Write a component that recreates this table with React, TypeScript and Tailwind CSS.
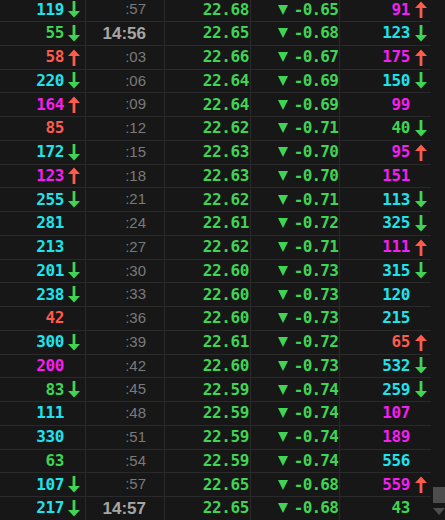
type Tone = "c" | "g" | "r" | "m";
type Dir = "up" | "down" | null;

interface Row {
  vol: number;
  volTone: Tone;
  volDir: Dir;
  time: string;
  price: string;
  diff: string;
  qty: number;
  qtyTone: Tone;
  qtyDir: Dir;
}

const toneClass: Record<Tone, string> = {
  c: "text-[#1ee3ec]",
  g: "text-[#3fd454]",
  r: "text-[#ff5b4d]",
  m: "text-[#f41ef0]",
};

const rows: Row[] = [
  { vol: 119, volTone: "c", volDir: "down", time: ":57", price: "22.68", diff: "-0.65", qty: 91, qtyTone: "m", qtyDir: "up" },
  { vol: 55, volTone: "g", volDir: "down", time: "14:56", price: "22.65", diff: "-0.68", qty: 123, qtyTone: "c", qtyDir: "down" },
  { vol: 58, volTone: "r", volDir: "up", time: ":03", price: "22.66", diff: "-0.67", qty: 175, qtyTone: "m", qtyDir: "up" },
  { vol: 220, volTone: "c", volDir: "down", time: ":06", price: "22.64", diff: "-0.69", qty: 150, qtyTone: "c", qtyDir: "down" },
  { vol: 164, volTone: "m", volDir: "up", time: ":09", price: "22.64", diff: "-0.69", qty: 99, qtyTone: "m", qtyDir: null },
  { vol: 85, volTone: "r", volDir: null, time: ":12", price: "22.62", diff: "-0.71", qty: 40, qtyTone: "g", qtyDir: "down" },
  { vol: 172, volTone: "c", volDir: "down", time: ":15", price: "22.63", diff: "-0.70", qty: 95, qtyTone: "m", qtyDir: "up" },
  { vol: 123, volTone: "m", volDir: "up", time: ":18", price: "22.63", diff: "-0.70", qty: 151, qtyTone: "m", qtyDir: null },
  { vol: 255, volTone: "c", volDir: "down", time: ":21", price: "22.62", diff: "-0.71", qty: 113, qtyTone: "c", qtyDir: "down" },
  { vol: 281, volTone: "c", volDir: null, time: ":24", price: "22.61", diff: "-0.72", qty: 325, qtyTone: "c", qtyDir: "down" },
  { vol: 213, volTone: "c", volDir: null, time: ":27", price: "22.62", diff: "-0.71", qty: 111, qtyTone: "m", qtyDir: "up" },
  { vol: 201, volTone: "c", volDir: "down", time: ":30", price: "22.60", diff: "-0.73", qty: 315, qtyTone: "c", qtyDir: "down" },
  { vol: 238, volTone: "c", volDir: "down", time: ":33", price: "22.60", diff: "-0.73", qty: 120, qtyTone: "c", qtyDir: null },
  { vol: 42, volTone: "r", volDir: null, time: ":36", price: "22.60", diff: "-0.73", qty: 215, qtyTone: "c", qtyDir: null },
  { vol: 300, volTone: "c", volDir: "down", time: ":39", price: "22.61", diff: "-0.72", qty: 65, qtyTone: "r", qtyDir: "up" },
  { vol: 200, volTone: "m", volDir: null, time: ":42", price: "22.60", diff: "-0.73", qty: 532, qtyTone: "c", qtyDir: "down" },
  { vol: 83, volTone: "g", volDir: "down", time: ":45", price: "22.59", diff: "-0.74", qty: 259, qtyTone: "c", qtyDir: "down" },
  { vol: 111, volTone: "c", volDir: null, time: ":48", price: "22.59", diff: "-0.74", qty: 107, qtyTone: "m", qtyDir: null },
  { vol: 330, volTone: "c", volDir: null, time: ":51", price: "22.59", diff: "-0.74", qty: 189, qtyTone: "m", qtyDir: null },
  { vol: 63, volTone: "g", volDir: null, time: ":54", price: "22.59", diff: "-0.74", qty: 556, qtyTone: "c", qtyDir: null },
  { vol: 107, volTone: "c", volDir: "down", time: ":57", price: "22.65", diff: "-0.68", qty: 559, qtyTone: "m", qtyDir: "up" },
  { vol: 217, volTone: "c", volDir: "down", time: "14:57", price: "22.65", diff: "-0.68", qty: 43, qtyTone: "g", qtyDir: null },
];

const mono = "font-['DejaVu_Sans_Mono',monospace] font-bold text-[16px] tracking-[-0.4px]";

// Thick tick arrow: green down / red up.
function Arrow({ dir }: { dir: Dir }) {
  if (!dir) return <span className="w-[12px] shrink-0" />;
  return (
    <svg
      width="12"
      height="17"
      viewBox="0 0 12 17"
      className={`shrink-0 ${dir === "up" ? "rotate-180 fill-[#ff5b4d]" : "fill-[#3fd454]"}`}
    >
      <path d="M4.6 0H7.4V10H12L6 16.5L0 10H4.6Z" />
    </svg>
  );
}

function TickRow({ row }: { row: Row }) {
  const big = row.time.length > 3;
  return (
    <div className="flex h-[23.75px] items-center border-b border-[#2a2a2a]">
      <div className="flex h-full w-[86px] items-center justify-end gap-[4px] border-r border-[#2a2a2a] pr-[5px]">
        <span className={`${mono} ${toneClass[row.volTone]}`}>{row.vol}</span>
        <Arrow dir={row.volDir} />
      </div>
      <div className="flex h-full w-[79px] items-center justify-end border-r border-[#2a2a2a] pr-[18px]">
        {big ? (
          <span className="font-['Liberation_Sans',sans-serif] text-[17px] font-bold text-[#a6a6a6]">
            {row.time}
          </span>
        ) : (
          <span className="font-['Liberation_Sans',sans-serif] text-[15px] text-[#7a7a7a]">
            {row.time}
          </span>
        )}
      </div>
      <div className="flex h-full w-[86px] items-center justify-end border-r border-[#2a2a2a] pr-[1px]">
        <span className={`${mono} text-[#3fd454]`}>{row.price}</span>
      </div>
      <div className="flex h-full w-[89px] items-center justify-between border-r border-[#2a2a2a] pl-[27px] pr-[1px]">
        <svg width="10" height="10" viewBox="0 0 10 10" className="shrink-0 fill-[#3fd454]">
          <path d="M0 0H10L5 10Z" />
        </svg>
        <span className={`${mono} tracking-[-0.8px] text-[#3fd454]`}>{row.diff}</span>
      </div>
      <div className="flex h-full w-[91px] items-center justify-end gap-[5px] pr-[4px]">
        <span className={`${mono} ${toneClass[row.qtyTone]}`}>{row.qty}</span>
        <Arrow dir={row.qtyDir} />
      </div>
    </div>
  );
}

export default function App() {
  return (
    <div className="flex h-[520px] w-[445px] overflow-hidden bg-[#171717]">
      <div className="w-[431px] shrink-0">
        <div className="-mt-[1.75px]">
          {rows.map((r, i) => (
            <TickRow key={i} row={r} />
          ))}
        </div>
      </div>
      <div className="flex flex-1 flex-col justify-end pb-[2px] pl-[2px]">
        <div className="h-[16px] w-[12px] bg-[#4d4d4d]" />
        <svg width="12" height="10" viewBox="0 0 12 10" className="mt-[5px] fill-[#4d4d4d]">
          <path d="M0 0H12L6 7Z" />
        </svg>
      </div>
    </div>
  );
}
